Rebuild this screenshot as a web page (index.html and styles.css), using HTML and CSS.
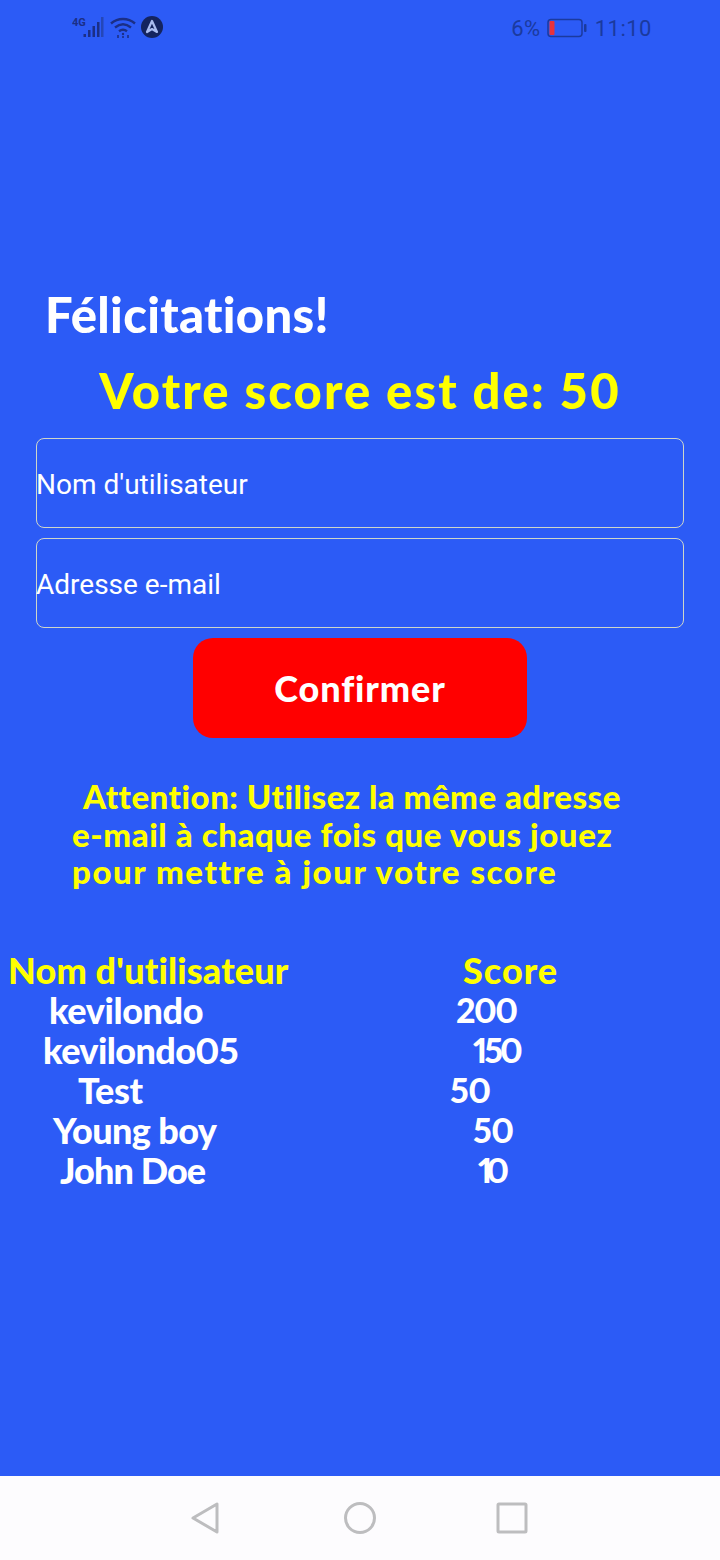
FILE: index.html
```html
<!DOCTYPE html>
<html lang="fr">
<head>
<meta charset="utf-8">
<title>Félicitations</title>
<link rel="stylesheet" href="styles.css">
</head>
<body>
<div class="screen">
  <header class="status">
    <div class="status-left">
      <svg class="ic-signal" width="34" height="28" viewBox="0 0 34 28">
        <text x="0" y="12" class="net">4G</text>
        <rect x="11.500" y="20" width="2.500" height="3" fill="#1b2f86"/>
        <rect x="16" y="16" width="2.500" height="7" fill="#1b2f86"/>
        <rect x="20.500" y="12" width="2.500" height="11" fill="#1b2f86"/>
        <rect x="25" y="8" width="2.500" height="15" fill="#1b2f86"/>
        <rect x="29" y="3" width="2.500" height="20" fill="#2447b8"/>
      </svg>
      <svg class="ic-wifi" width="28" height="24" viewBox="0 0 28 24" fill="none" stroke="#1b2f86" stroke-width="2.400">
        <path d="M2 7.500C9 1.500 19 1.500 26 7.500"/>
        <path d="M6 11.500C11 7.500 17 7.500 22 11.500"/>
        <path d="M10 15.200C12.500 13.400 15.500 13.400 18 15.200"/>
        <circle cx="14" cy="18" r="1.200" fill="#1b2f86" stroke="none"/>
        <path d="M9 19v3M14 20v2M19 19v3" stroke-width="1.600"/>
      </svg>
      <svg class="ic-app" width="22" height="22" viewBox="0 0 22 22">
        <circle cx="11" cy="11" r="11" fill="#14245f"/>
        <path d="M6 16 11 5 16 16 11 13Z" fill="none" stroke="#a9bcf0" stroke-width="2.200" stroke-linejoin="round"/>
      </svg>
    </div>
    <div class="status-right">
      <span>6%</span>
      <svg class="ic-batt" width="40" height="20" viewBox="0 0 40 20">
        <rect x="1" y="1.500" width="34" height="17" rx="3" fill="none" stroke="#1b3a9e" stroke-width="1.500"/>
        <rect x="2.500" y="3" width="5" height="14" rx="1" fill="#e8323c"/>
        <rect x="37" y="6" width="2.500" height="8" rx="1" fill="#1b3a9e"/>
      </svg>
      <span>11:10</span>
    </div>
  </header>

  <main class="content">
    <h1 class="title">Félicitations!</h1>
    <h2 class="score">Votre score est de: 50</h2>
    <div class="field">Nom d'utilisateur</div>
    <div class="field">Adresse e-mail</div>
    <button class="confirm" type="button">Confirmer</button>
    <p class="note">
      <span class="l1">Attention: Utilisez la même adresse</span>
      <span>e-mail à chaque fois que vous jouez</span>
      <span class="l3">pour mettre à jour votre score</span>
    </p>
    <section class="board">
      <div class="row head"><span class="n0">Nom d'utilisateur</span><span class="s0">Score</span></div>
      <div class="row"><span class="n1">kevilondo</span><span class="s1">200</span></div>
      <div class="row"><span class="n2">kevilondo05</span><span class="s2">150</span></div>
      <div class="row"><span class="n3">Test</span><span class="s3">50</span></div>
      <div class="row"><span class="n4">Young boy</span><span class="s4">50</span></div>
      <div class="row"><span class="n5">John Doe</span><span class="s5">10</span></div>
    </section>
  </main>

  <nav class="navbar">
    <svg width="30" height="34" viewBox="0 0 30 34" fill="none" stroke="#bdbdbf" stroke-width="3" stroke-linejoin="round"><path d="M3 17 27 3V31Z"/></svg>
    <svg class="nav-home" width="34" height="34" viewBox="0 0 34 34" fill="none" stroke="#bdbdbf" stroke-width="3"><circle cx="17" cy="17" r="14.500"/></svg>
    <svg width="32" height="32" viewBox="0 0 32 32" fill="none" stroke="#bdbdbf" stroke-width="3" stroke-linejoin="round"><rect x="2" y="2" width="28" height="28" rx="1"/></svg>
  </nav>
</div>
</body>
</html>
```
FILE: styles.css
```css
* { box-sizing: border-box; }
html, body { margin: 0; padding: 0; }
body { background: #2c5bf6; font-family: "Lato", "Liberation Sans", sans-serif; }
.screen { width: 720px; height: 1560px; display: flex; flex-direction: column; background: #2c5bf6; overflow: hidden; }

.status { height: 56px; flex: none; display: flex; justify-content: space-between; align-items: center; padding: 0 68px 0 72px; }
.status-left { display: flex; align-items: center; gap: 3px; }
.ic-app { margin: 0 0 2px 1px; }
.status-right { display: flex; align-items: center; font-family: "Roboto", sans-serif; font-size: 22px; color: #1b3a9e; letter-spacing: .5px; }
.ic-batt { margin: 0 8px 0 6px; }
.net { font: 700 11px "Roboto", sans-serif; fill: #1b2f86; }

.content { flex: 1; display: flex; flex-direction: column; align-items: stretch; padding-top: 230px; }
.title { margin: 0 0 0 45px; font-size: 49px; line-height: 56px; font-weight: 900; color: #fff; letter-spacing: .3px; }
.score { margin: 20px 0 20px; text-align: center; font-size: 49px; line-height: 56px; font-weight: 900; color: #ffff00; letter-spacing: 2.100px; }
.field { height: 90px; margin: 0 36px 10px; padding-top: 2px; display: flex; align-items: center; border: 1px solid #cfd6c8; border-radius: 8px; color: #fff; font: 400 28px "Roboto", sans-serif; text-indent: -1px; }
.confirm { width: 334px; height: 100px; margin: 0 auto; flex: none; border: 0; border-radius: 20px; background: #ff0000; color: #fff; font-family: inherit; font-size: 36px; font-weight: 900; letter-spacing: .9px; }
.note { margin: 40px 0 0 72px; display: flex; flex-direction: column; font-size: 33px; line-height: 37.500px; font-weight: 900; color: #ffff00; letter-spacing: .6px; }
.l1 { margin-left: 11px; letter-spacing: .5px; }
.l3 { letter-spacing: 1.550px; }

.board { margin-top: 57px; display: flex; flex-direction: column; }
.row { display: grid; grid-template-columns: 450px 1fr; height: 40px; align-items: center; color: #fff; font-size: 36px; font-weight: 900; letter-spacing: -.4px; font-variant-numeric: proportional-nums; }
.head { color: #ffff00; letter-spacing: .15px; }
.n0 { margin-left: 8px; }
.s0 { margin-left: 13px; letter-spacing: 1px; }
.n1 { margin-left: 49px; }
.s1 { margin-left: 6px; font-size: 34px; letter-spacing: -1.500px; }
.n2 { margin-left: 43px; letter-spacing: -.6px; }
.s2 { margin-left: 23px; font-size: 34px; letter-spacing: -3px; }
.n3 { margin-left: 78px; }
.s3 { margin-left: 0; font-size: 34px; letter-spacing: -.5px; }
.n4 { margin-left: 53px; letter-spacing: -.6px; }
.s4 { margin-left: 23px; font-size: 34px; letter-spacing: -.5px; }
.n5 { margin-left: 60px; letter-spacing: -.9px; }
.s5 { margin-left: 28px; font-size: 34px; letter-spacing: -6px; }

.navbar { height: 84px; flex: none; background: #fdfcfe; display: flex; align-items: center; padding: 0 0 0 190px; }
.nav-home { margin: 0 119px 0 123px; }
```
